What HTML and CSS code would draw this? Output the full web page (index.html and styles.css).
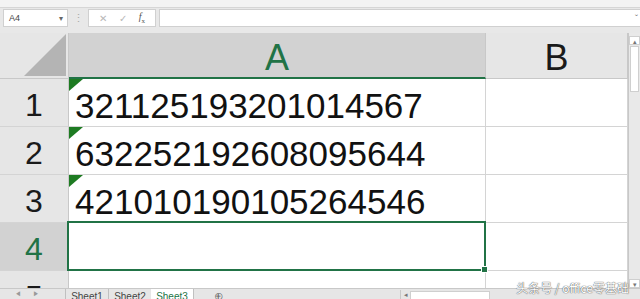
FILE: index.html
```html
<!DOCTYPE html>
<html lang="zh">
  <head>
    <meta charset="UTF-8" />
    <title>Sheet3 - Excel</title>
    <link rel="stylesheet" href="styles.css">
  </head>
  <body>
    <div class="app">
      <div class="top-strip"></div>
      <div class="formula-bar">
        <div class="name-box">
          <span>A4</span>
          <span class="caret">&#9662;</span>
        </div>
        <div class="grip">&#8942;</div>
        <div class="fx-buttons">
          <span class="fx-btn">&#10005;</span>
          <span class="fx-btn">&#10003;</span>
          <span class="fx-btn fx"><i>f</i><sub>x</sub></span>
        </div>
        <div class="formula-input">
          <span class="caret">&#711;</span>
        </div>
      </div>

      <div class="sheet">
        <div class="corner"><div class="corner-tri"></div></div>
        <div class="col-head selected">A</div>
        <div class="col-head">B</div>
        <div class="vscroll">
          <div class="vs-arrow">&#9652;</div>
          <div class="vs-thumb"></div>
          <div class="vs-track"></div>
          <div class="vs-arrow">&#9662;</div>
        </div>

        <div class="row-head">1</div>
        <div class="cell text-num">321125193201014567</div>
        <div class="cell"></div>

        <div class="row-head">2</div>
        <div class="cell text-num">632252192608095644</div>
        <div class="cell"></div>

        <div class="row-head">3</div>
        <div class="cell text-num">421010190105264546</div>
        <div class="cell"></div>

        <div class="row-head selected">4</div>
        <div class="cell active"></div>
        <div class="cell"></div>

        <div class="row-head">5</div>
        <div class="cell"></div>
        <div class="cell"></div>
      </div>

      <div class="tabs">
        <div class="tab-nav">
          <span>&#9664;</span>
          <span>&#9654;</span>
        </div>
        <div class="tab">Sheet1</div>
        <div class="tab">Sheet2</div>
        <div class="tab active">Sheet3</div>
        <div class="tab-add">&#8853;</div>
        <div class="tab-spacer"></div>
        <div class="hscroll">
          <span class="hs-arrow">&#9666;</span>
          <span class="hs-thumb"></span>
        </div>
      </div>

      <div class="watermark">头条号 / office零基础</div>
    </div>
  </body>
</html>
```

FILE: styles.css
```css
* {
  box-sizing: border-box;
}
body {
  margin: 0;
  font-family: "Liberation Sans", Arial, sans-serif;
  background-color: #e6e6e6;
  overflow: hidden;
}
.app {
  position: relative;
  width: 640px;
  height: 299px;
  overflow: hidden;
  display: flex;
  flex-direction: column;
}
.top-strip {
  height: 8px;
  background: #f3f3f3;
  border-bottom: 1px solid #d6d6d6;
}
.formula-bar {
  height: 25px;
  display: flex;
  align-items: flex-start;
  padding: 1px 0 0 3px;
  background: #e8e8e8;
}
.name-box {
  width: 65px;
  height: 18px;
  background: #fff;
  border: 1px solid #d0d0d0;
  display: flex;
  justify-content: space-between;
  align-items: center;
  padding: 0 4px 0 5px;
  font-size: 9px;
  color: #444;
}
.name-box .caret {
  font-size: 8px;
  color: #666;
}
.grip {
  width: 20px;
  text-align: center;
  font-size: 11px;
  line-height: 18px;
  color: #aaa;
}
.fx-buttons {
  width: 68px;
  height: 18px;
  background: #fff;
  border: 1px solid #d0d0d0;
  display: flex;
  justify-content: space-around;
  align-items: center;
  padding: 0 4px;
  font-size: 10px;
  color: #b8b8b8;
}
.fx-buttons .fx {
  color: #555;
  font-family: "Liberation Serif", serif;
  font-size: 10px;
}
.fx-buttons .fx sub {
  font-size: 7px;
}
.formula-input {
  flex: 1;
  height: 18px;
  margin-left: 3px;
  background: #fff;
  border: 1px solid #d0d0d0;
  border-right: none;
  display: flex;
  justify-content: flex-end;
  align-items: center;
  padding-right: 2px;
  font-size: 9px;
  color: #777;
}

.sheet {
  height: 255px;
  display: grid;
  grid-template-columns: 69px 417px 142px 12px;
  grid-template-rows: 46px 48px 48px 48px 48px 48px;
  overflow: hidden;
  background: #fff;
}
.corner {
  position: relative;
  background: #e6e6e6;
  border-right: 1px solid #c8c8c8;
  border-bottom: 1px solid #c8c8c8;
}
.corner-tri {
  position: absolute;
  right: 2px;
  bottom: 2px;
  width: 42px;
  height: 42px;
  background: #b4b4b4;
  clip-path: polygon(100% 0, 100% 100%, 0 100%);
}
.col-head {
  background: #e6e6e6;
  border-right: 1px solid #c8c8c8;
  border-bottom: 1px solid #c8c8c8;
  text-align: center;
  font-size: 36px;
  line-height: 50px;
  color: #1a1a1a;
}
.col-head.selected {
  background: #d2d2d2;
  color: #217346;
  border-bottom: 2px solid #217346;
}
.row-head {
  background: #e6e6e6;
  border-right: 1px solid #c8c8c8;
  border-bottom: 1px solid #d4d4d4;
  text-align: center;
  font-size: 32px;
  line-height: 53px;
  color: #1a1a1a;
}
.row-head.selected {
  background: #d2d2d2;
  color: #217346;
}
.cell {
  position: relative;
  border-right: 1px solid #d4d4d4;
  border-bottom: 1px solid #d4d4d4;
  font-size: 35px;
  line-height: 53px;
  padding-left: 6px;
  color: #111;
  white-space: nowrap;
}
.text-num::before {
  content: "";
  position: absolute;
  left: 0;
  top: 0;
  border-top: 12px solid #1e7b22;
  border-right: 14px solid transparent;
}
.cell.active::after {
  content: "";
  position: absolute;
  left: -2px;
  top: -2px;
  right: -1px;
  bottom: -1px;
  border: 2px solid #217346;
}
.cell.active::before {
  content: "";
  position: absolute;
  right: -3px;
  bottom: -3px;
  width: 5px;
  height: 5px;
  background: #217346;
  border: 1px solid #fff;
  z-index: 1;
}
.vscroll {
  grid-row: 1 / 7;
  grid-column: 4;
  background: #e9e9e9;
  border-left: 1px solid #c8c8c8;
  display: flex;
  flex-direction: column;
  padding-top: 3px;
}
.vs-arrow {
  height: 9px;
  font-size: 7px;
  line-height: 9px;
  text-align: center;
  color: #777;
  background: #fff;
  border: 1px solid #cfcfcf;
}
.vs-thumb {
  height: 46px;
  margin: 1px;
  background: #fff;
  border: 1px solid #cfcfcf;
}
.vs-track {
  height: 186px;
}

.tabs {
  position: relative;
  height: 11px;
  display: flex;
  align-items: flex-start;
  background: #e6e6e6;
  border-top: 1px solid #c8c8c8;
  font-size: 10px;
  color: #444;
}
.tab-nav {
  width: 65px;
  display: flex;
  gap: 12px;
  padding-left: 15px;
  font-size: 6px;
  line-height: 10px;
  color: #999;
}
.tab {
  width: 43px;
  text-align: center;
  line-height: 15px;
  border-left: 1px solid #c0c0c0;
}
.tab.active {
  background: #fff;
  color: #217346;
  border-left: none;
  border-right: 1px solid #c0c0c0;
}
.tab-add {
  width: 50px;
  text-align: center;
  font-size: 12px;
  line-height: 14px;
  color: #666;
}
.tab-spacer {
  flex: 1;
}
.hscroll {
  width: 228px;
  height: 10px;
  margin-top: 1px;
  margin-right: 12px;
  display: flex;
  align-items: center;
  border-left: 1px solid #c8c8c8;
}
.hs-arrow {
  width: 9px;
  font-size: 7px;
  text-align: center;
  color: #777;
}
.hs-thumb {
  width: 80px;
  height: 9px;
  background: #fff;
  border: 1px solid #cfcfcf;
}
.watermark {
  position: absolute;
  right: 11px;
  bottom: 4px;
  font-family: "Noto Sans CJK SC", sans-serif;
  font-size: 12px;
  line-height: 14px;
  color: #fff;
  text-shadow: 0 0 1px #555, 0 0 1px #555;
}
```
